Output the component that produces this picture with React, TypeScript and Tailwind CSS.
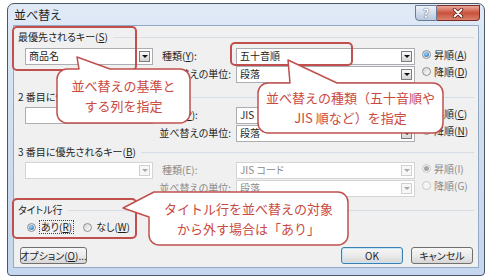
import type { ReactNode } from "react";

const JP = "font-['Noto_Sans_CJK_JP','Noto_Sans_CJK_SC',sans-serif]";

function U({ children }: { children: ReactNode }) {
  return <span className="underline underline-offset-[1px]">{children}</span>;
}

function DropButton({ disabled }: { disabled?: boolean }) {
  return (
    <span
      className={`flex h-[11px] w-[11px] shrink-0 items-center justify-center border ${
        disabled ? "border-[#d0d0d0] bg-[#f7f7f7]" : "border-[#7d7d7d] bg-linear-to-b from-[#fbfbfb] to-[#d4d4d4]"
      }`}
    >
      <span
        className={`h-0 w-0 border-x-[3px] border-t-[3px] border-x-transparent ${
          disabled ? "border-t-[#a8a8a8]" : "border-t-[#111]"
        }`}
      />
    </span>
  );
}

function Combo({ value, disabled, className }: { value?: string; disabled?: boolean; className: string }) {
  return (
    <div
      className={`flex h-[17px] items-center border bg-white pl-[3px] pr-[2px] ${
        disabled ? "border-[#d4d4d4] text-[#8a8a8a]" : "border-[#abadb3]"
      } ${className}`}
    >
      <span className="flex-1 truncate">{value}</span>
      <DropButton disabled={disabled} />
    </div>
  );
}

function Radio({ checked, disabled }: { checked?: boolean; disabled?: boolean }) {
  return (
    <span
      className={`flex h-[9px] w-[9px] shrink-0 items-center justify-center rounded-full border ${
        disabled ? "border-[#c9c9c9] bg-[#f5f5f5]" : "border-[#8e8f8f] bg-linear-to-br from-[#d6d6d6] to-[#fbfbfb]"
      }`}
    >
      {checked && (
        <span
          className={`h-[5px] w-[5px] rounded-full ${
            disabled ? "bg-[#a6a6a6]" : "bg-[radial-gradient(circle_at_40%_35%,#9ad6ff,#1760b4)]"
          }`}
        />
      )}
    </span>
  );
}

function GroupHead({ children, className }: { children: ReactNode; className: string }) {
  return (
    <div className={`flex h-[16px] items-center pl-[4px] ${className}`}>
      <span>{children}</span>
      <span className="ml-[5px] mr-[4px] h-px flex-1 bg-[#d7dde4]" />
    </div>
  );
}

type GroupProps = {
  head: ReactNode;
  headMt: string;
  bodyMt: string;
  keyValue?: string;
  keyDim?: boolean;
  typeLabel: ReactNode;
  typeValue: string;
  asc: ReactNode;
  desc: ReactNode;
  dim?: boolean;
};

function KeyGroup({ head, headMt, bodyMt, keyValue, keyDim, typeLabel, typeValue, asc, desc, dim }: GroupProps) {
  const lbl = dim ? "text-[#8a8a8a]" : "";
  return (
    <>
      <GroupHead className={headMt}>{head}</GroupHead>
      <div className={`flex items-start ${bodyMt}`}>
        <div className="flex flex-col">
          <div className="flex h-[18px] items-center">
            <Combo className="ml-[11px] w-[128px]" value={keyValue} disabled={keyDim} />
            <span className={`ml-[9px] w-[69px] ${lbl}`}>{typeLabel}</span>
            <Combo className="ml-[5px] w-[179px]" value={typeValue} disabled={dim} />
          </div>
          <div className="flex h-[18px] items-center">
            <span className={`ml-[148px] flex w-[69px] justify-end ${lbl}`}>並べ替えの単位:</span>
            <Combo className="ml-[5px] w-[179px]" value="段落" disabled={dim} />
          </div>
        </div>
        <div className="-mt-[1px] ml-[7px] flex flex-col">
          <div className="flex h-[17px] items-center">
            <Radio checked disabled={dim} />
            <span className={`ml-[3px] ${lbl}`}>{asc}</span>
          </div>
          <div className="flex h-[17px] items-center">
            <Radio disabled={dim} />
            <span className={`ml-[3px] ${lbl}`}>{desc}</span>
          </div>
        </div>
      </div>
    </>
  );
}

function Btn({ children, className, primary }: { children: ReactNode; className: string; primary?: boolean }) {
  return (
    <div
      className={`flex h-[17px] items-center justify-center rounded-[3px] border bg-linear-to-b from-[#f7f7f7] via-[#ebebeb] to-[#d6d6d6] ${
        primary ? "border-[#3c7fb1] shadow-[inset_0_0_0_1px_#c3e4f7]" : "border-[#707070]"
      } ${className}`}
    >
      {children}
    </div>
  );
}

export default function App() {
  return (
    <div className={`relative h-[278px] w-[491px] overflow-hidden bg-white text-[#1e1e1e] ${JP}`}>
      {/* dialog window */}
      <div className="ml-[7px] mt-[3px] flex h-[273px] w-[478px] flex-col rounded-t-[7px] rounded-b-[4px] border border-[#4d5866] bg-linear-to-b from-[#e0eaf7] via-[#cfddf0] to-[#c5d7ee]">
        {/* title bar */}
        <div className="flex h-[21px] shrink-0 items-center">
          <span className="pl-[6px] text-[12px] [font-feature-settings:'palt'_1]">並べ替え</span>
          <div className="ml-auto mr-[4px] mt-[1px] flex self-start">
            <div className="flex h-[16px] w-[22px] items-center justify-center rounded-bl-[4px] border border-[#6b7a92] bg-linear-to-b from-[#eef2f9] to-[#b8c8df] text-[12px] font-bold text-white [text-shadow:0_0_1px_#4f5f78,0_0_1px_#4f5f78]">
              ?
            </div>
            <div className="flex h-[16px] w-[43px] items-center justify-center rounded-br-[4px] border border-l-0 border-[#7a2a20] bg-linear-to-b from-[#eaa99b] via-[#c9503c] to-[#d8806c]">
              <svg width="12" height="10" viewBox="0 0 12 10">
                <path d="M2.5 1.5 L9.5 8.5 M9.5 1.5 L2.5 8.5" stroke="#5a1d14" strokeWidth="3.4" strokeLinecap="round" />
                <path d="M2.5 1.5 L9.5 8.5 M9.5 1.5 L2.5 8.5" stroke="#ffffff" strokeWidth="1.8" strokeLinecap="round" />
              </svg>
            </div>
          </div>
        </div>

        {/* client area */}
        <div className="mx-[5px] flex h-[243px] flex-col whitespace-nowrap border border-[#95a9c4] bg-[#f0f0f0] text-[10px] leading-none [font-feature-settings:'palt'_1]">
          <KeyGroup
            head={<>最優先されるキー(<U>S</U>)</>}
            headMt="mt-[3px]"
            bodyMt="mt-[2px]"
            keyValue="商品名"
            typeLabel={<>種類(<U>Y</U>):</>}
            typeValue="五十音順"
            asc={<>昇順(<U>A</U>)</>}
            desc={<>降順(<U>D</U>)</>}
          />
          <KeyGroup
            head={<>2 番目に優先されるキー(<U>T</U>)</>}
            headMt="mt-[6px]"
            bodyMt="mt-[1px]"
            typeLabel={<>種類(<U>P</U>):</>}
            typeValue="JIS コード"
            asc={<>昇順(<U>C</U>)</>}
            desc={<>降順(<U>N</U>)</>}
          />
          <KeyGroup
            head={<>3 番目に優先されるキー(<U>B</U>)</>}
            headMt="mt-[2px]"
            bodyMt="mt-[1px]"
            keyDim
            dim
            typeLabel="種類(E):"
            typeValue="JIS コード"
            asc="昇順(I)"
            desc="降順(G)"
          />

          <GroupHead className="mt-[5px]">タイトル行</GroupHead>
          <div className="mt-[1px] flex h-[16px] items-center pl-[13px]">
            <Radio checked />
            <span className="ml-[3px] border border-dotted border-[#444] px-[1px] py-[1px]">
              あり(<U>R</U>)
            </span>
            <span className="ml-[9px]">
              <Radio />
            </span>
            <span className="ml-[4px]">
              なし(<U>W</U>)
            </span>
          </div>

          <div className="mt-[12px] flex pl-[6px] pr-[5px]">
            <Btn className="w-[67px]">
              オプション(<U>O</U>)...
            </Btn>
            <Btn className="ml-auto w-[62px]" primary>
              OK
            </Btn>
            <Btn className="ml-[8px] w-[62px]">キャンセル</Btn>
          </div>
        </div>
      </div>

      {/* highlight boxes */}
      <div className="absolute left-[12px] top-[26px] h-[45px] w-[125px] rounded-[5px] border-2 border-[#c0504d]" />
      <div className="absolute left-[230px] top-[42px] h-[24px] w-[123px] rounded-[5px] border-2 border-[#c0504d]" />
      <div className="absolute left-[12px] top-[198px] h-[41px] w-[125px] rounded-[5px] border-2 border-[#c0504d]" />

      {/* callout bubbles */}
      <svg className="absolute left-0 top-0" width="491" height="278" viewBox="0 0 491 278">
        <g fill="#ffffff" stroke="#c0504d" strokeWidth="1.5" strokeLinejoin="round">
          <path d="M67 69 L79 69 L77 57 L110 69 L180 69 A10 10 0 0 1 190 79 L190 113 A10 10 0 0 1 180 123 L67 123 A10 10 0 0 1 57 113 L57 79 A10 10 0 0 1 67 69 Z" />
          <path d="M268 83 L290 83 L288 60 L337 83 L433 83 A10 10 0 0 1 443 93 L443 123 A10 10 0 0 1 433 133 L268 133 A10 10 0 0 1 258 123 L258 93 A10 10 0 0 1 268 83 Z" />
          <path d="M154 192 L338 192 A10 10 0 0 1 348 202 L348 235 A10 10 0 0 1 338 245 L159 245 A10 10 0 0 1 149 235 L149 217 L123 208 Z" />
        </g>
      </svg>
      <div className="absolute left-[57px] top-[69px] flex h-[54px] w-[133px] flex-col items-center justify-center text-[13px] leading-[20px] text-[#c94a3f]">
        <span>並べ替えの基準と</span>
        <span>する列を指定</span>
      </div>
      <div className="absolute left-[258px] top-[83px] flex h-[50px] w-[185px] flex-col items-center justify-center text-[13px] leading-[20px] text-[#c94a3f]">
        <span>並べ替えの種類（五十音順や</span>
        <span>JIS 順など）を指定</span>
      </div>
      <div className="absolute left-[149px] top-[192px] flex h-[53px] w-[199px] flex-col items-center justify-center text-[13px] leading-[20px] text-[#c94a3f]">
        <span>タイトル行を並べ替えの対象</span>
        <span>から外す場合は「あり」</span>
      </div>
    </div>
  );
}
